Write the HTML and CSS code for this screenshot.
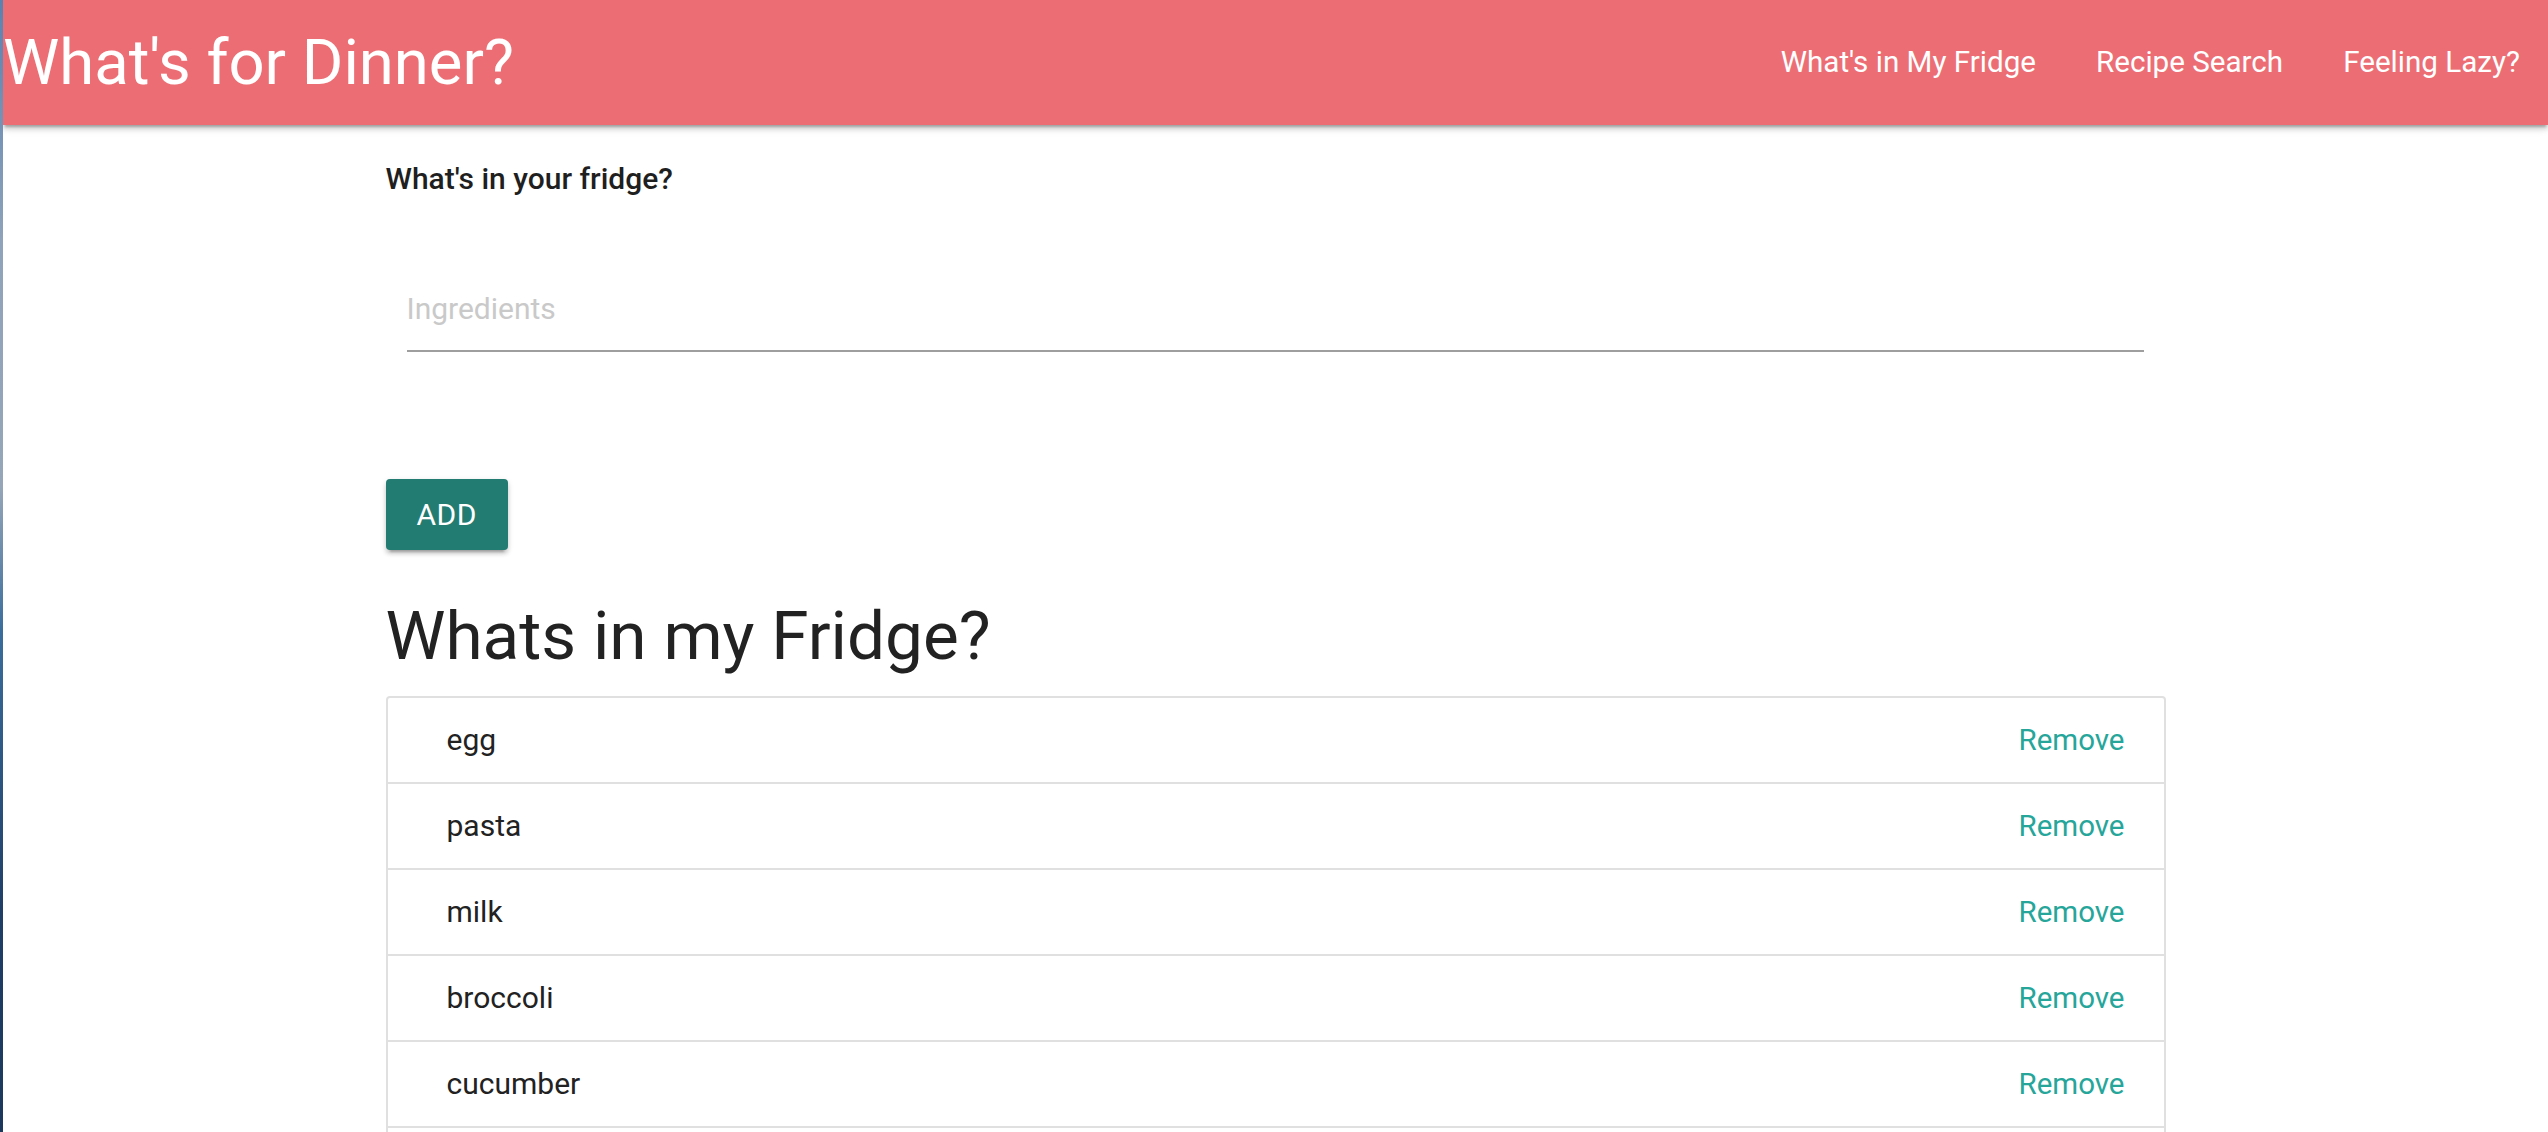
FILE: index.html
```html
<!DOCTYPE html>
<html lang="en">
<head>
<meta charset="utf-8">
<title>What's for Dinner?</title>
<link rel="stylesheet" href="styles.css">
</head>
<body>
<nav class="navbar">
  <a class="brand" href="#">What's for Dinner?</a>
  <ul class="nav-links">
    <li><a href="#">What's in My Fridge</a></li>
    <li><a href="#">Recipe Search</a></li>
    <li><a href="#">Feeling Lazy?</a></li>
  </ul>
</nav>
<main class="container">
  <form class="fridge-form">
    <p class="form-label">What's in your fridge?</p>
    <div class="input-field">
      <input type="text" placeholder="Ingredients">
    </div>
    <button type="button" class="btn">Add</button>
  </form>
  <h4 class="section-title">Whats in my Fridge?</h4>
  <ul class="collection">
    <li class="collection-item"><span>egg</span><a href="#" class="remove">Remove</a></li>
    <li class="collection-item"><span>pasta</span><a href="#" class="remove">Remove</a></li>
    <li class="collection-item"><span>milk</span><a href="#" class="remove">Remove</a></li>
    <li class="collection-item"><span>broccoli</span><a href="#" class="remove">Remove</a></li>
    <li class="collection-item"><span>cucumber</span><a href="#" class="remove">Remove</a></li>
    <li class="collection-item"><span>tomato</span><a href="#" class="remove">Remove</a></li>
  </ul>
</main>
</body>
</html>
```

FILE: styles.css
```css
* { box-sizing: border-box; }
html, body { margin: 0; padding: 0; background: #fff; }
body {
  font-family: Roboto, "Liberation Sans", Arial, sans-serif;
  color: rgba(0, 0, 0, 0.87);
  border-left: 3px solid #2f4f78;
  border-image: linear-gradient(to bottom, #5a82b0 0%, #8fa3ba 20%, #96a6b8 40%, #3a6d9c 52%, #1f3e66 75%, #1a3558 100%) 1;
  min-height: 1132px;
  overflow: hidden;
}
.navbar {
  height: 125px;
  background: #ec6e74;
  display: flex;
  align-items: center;
  justify-content: space-between;
  box-shadow: 0 4px 5px 0 rgba(0,0,0,0.14), 0 2px 10px 0 rgba(0,0,0,0.12), 0 4px 2px -2px rgba(0,0,0,0.2);
  position: relative;
  z-index: 1;
}
.brand {
  color: #fff;
  text-decoration: none;
  font-size: 63.4px;
  line-height: 125px;
  padding-left: 0;
}
.nav-links {
  list-style: none;
  margin: 0;
  padding: 0;
  display: flex;
}
.nav-links a {
  display: block;
  color: #fff;
  text-decoration: none;
  font-size: 29.6px;
  line-height: 125px;
  padding: 0 30px;
}
.nav-links li:last-child a { padding-right: 28px; }
.container {
  width: 1780px;
  margin: 0 auto;
}
.fridge-form { margin: 0; }
.form-label {
  margin: 0;
  padding-top: 31px;
  font-size: 30px;
  font-weight: 500;
  line-height: 45px;
  color: #1f1f1f;
}
.input-field {
  padding: 0 22px 0 21px;
  margin-top: 61px;
}
.input-field input {
  display: block;
  width: 100%;
  height: 90px;
  border: none;
  border-bottom: 2px solid #9e9e9e;
  outline: none;
  background: transparent;
  font-family: inherit;
  font-size: 30px;
  padding: 4px 0 0;
  color: rgba(0,0,0,0.87);
}
.input-field input::placeholder { color: #c9c9c9; }
.btn {
  margin-top: 127px;
  height: 71px;
  padding: 0 31px;
  border: none;
  border-radius: 4px;
  background: #227c72;
  color: #fff;
  font-family: inherit;
  font-size: 30px;
  text-transform: uppercase;
  letter-spacing: 0.5px;
  box-shadow: 0 4px 4px 0 rgba(0,0,0,0.14), 0 2px 6px 0 rgba(0,0,0,0.12), 0 6px 2px -4px rgba(0,0,0,0.2);
  display: block;
}
.section-title {
  font-size: 67.5px;
  font-weight: 400;
  line-height: 74px;
  margin: 49px 0 23px;
  color: #222;
}
.collection {
  list-style: none;
  margin: 0;
  padding: 0;
  border: 2px solid #e0e0e0;
  border-radius: 4px;
}
.collection-item {
  display: flex;
  justify-content: space-between;
  align-items: center;
  padding: 20px 39px 20px 59px;
  line-height: 44px;
  font-size: 30px;
  border-bottom: 2px solid #e0e0e0;
  color: #222;
}
.remove {
  color: #26a69a;
  text-decoration: none;
  font-size: 29.5px;
}
```
